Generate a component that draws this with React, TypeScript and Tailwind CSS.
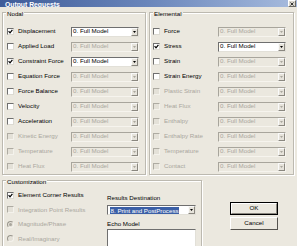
import React from "react";

type RowDef = { label: string; checked?: boolean; enabled: boolean; dd: boolean };

const nodal: RowDef[] = [
  { label: "Displacement", checked: true, enabled: true, dd: true },
  { label: "Applied Load", enabled: true, dd: false },
  { label: "Constraint Force", checked: true, enabled: true, dd: true },
  { label: "Equation Force", enabled: true, dd: false },
  { label: "Force Balance", enabled: true, dd: false },
  { label: "Velocity", enabled: true, dd: false },
  { label: "Acceleration", enabled: true, dd: false },
  { label: "Kinetic Energy", enabled: false, dd: false },
  { label: "Temperature", enabled: false, dd: false },
  { label: "Heat Flux", enabled: false, dd: false },
];

const elemental: RowDef[] = [
  { label: "Force", enabled: true, dd: false },
  { label: "Stress", checked: true, enabled: true, dd: true },
  { label: "Strain", enabled: true, dd: false },
  { label: "Strain Energy", enabled: true, dd: false },
  { label: "Plastic Strain", enabled: false, dd: false },
  { label: "Heat Flux", enabled: false, dd: false },
  { label: "Enthalpy", enabled: false, dd: false },
  { label: "Enthalpy Rate", enabled: false, dd: false },
  { label: "Temperature", enabled: false, dd: false },
  { label: "Contact", enabled: false, dd: false },
];

function Check({ checked, enabled }: { checked?: boolean; enabled: boolean }) {
  return (
    <div
      className={
        enabled
          ? "w-[7px] h-[7px] shrink-0 bg-white border border-t-[#6f6f6f] border-l-[#6f6f6f] border-b-[#dcdad2] border-r-[#dcdad2] flex items-center justify-center"
          : "w-[7px] h-[7px] shrink-0 bg-[#e4e1d8] border border-t-[#aeaba2] border-l-[#aeaba2] border-b-[#f4f2ec] border-r-[#f4f2ec]"
      }
    >
      {checked && (
        <svg width="5" height="5" viewBox="0 0 5 5">
          <path d="M0.6 2.2 L2 3.8 L4.4 0.8" stroke="#000" strokeWidth="1.2" fill="none" />
        </svg>
      )}
    </div>
  );
}

function Arrow({ enabled }: { enabled: boolean }) {
  return (
    <div className="w-[7px] h-full shrink-0 bg-[#e6e3db] border border-t-[#fafafa] border-l-[#fafafa] border-b-[#8a877f] border-r-[#8a877f] flex items-center justify-center">
      <svg width="3" height="2" viewBox="0 0 3 2">
        <polygon points="0,0 3,0 1.5,2" fill={enabled ? "#000" : "#a9a69d"} />
      </svg>
    </div>
  );
}

function Dropdown({ enabled }: { enabled: boolean }) {
  return (
    <div
      className={
        enabled
          ? "w-[68px] h-[10px] shrink-0 flex items-center bg-white border border-t-[#6f6f6f] border-l-[#6f6f6f] border-b-[#e2e0d8] border-r-[#e2e0d8]"
          : "w-[68px] h-[10px] shrink-0 flex items-center bg-[#ebe8df] border border-t-[#a8a59c] border-l-[#a8a59c] border-b-[#f6f4ee] border-r-[#f6f4ee]"
      }
    >
      <span className={enabled ? "flex-1 pl-[1px] text-black leading-none" : "flex-1 pl-[1px] text-[#aaa79e] leading-none"}>
        0. Full Model
      </span>
      <Arrow enabled={enabled} />
    </div>
  );
}

function Row({ r }: { r: RowDef }) {
  return (
    <div className="flex items-center h-[15px]">
      <Check checked={r.checked} enabled={r.enabled} />
      <span className={r.enabled ? "ml-[4px] flex-1 text-black leading-none" : "ml-[4px] flex-1 text-[#aaa79e] leading-none"}>
        {r.label}
      </span>
      <Dropdown enabled={r.dd} />
    </div>
  );
}

function Group({ title, rows, className }: { title: string; rows: RowDef[]; className: string }) {
  return (
    <div className={className}>
      <span className="absolute left-[3px] top-[-3px] px-[1px] bg-[#ebe8df] text-black leading-[7px]">{title}</span>
      {rows.map((r) => (
        <Row key={r.label} r={r} />
      ))}
    </div>
  );
}

export default function App() {
  return (
    <div className="w-[297px] h-[246px] overflow-hidden bg-[#ebe8df] font-['Liberation_Sans',Arial,sans-serif] text-[6.2px] flex flex-col">
      {/* title bar */}
      <div className="h-[7px] shrink-0 flex items-end justify-between bg-gradient-to-r from-[#3f5c99] via-[#6a86bb] to-[#a8bcde] overflow-hidden">
        <span className="ml-[5px] mb-[-1px] text-white font-bold text-[6.8px] leading-[7px]">Output Requests</span>
        <div className="w-[8px] h-[7px] mr-[1px] bg-[#d9d6ce] border border-t-white border-l-white border-b-[#6c6a64] border-r-[#6c6a64] flex items-center justify-center">
          <svg width="4" height="4" viewBox="0 0 4 4">
            <path d="M0.5 0.5 L3.5 3.5 M3.5 0.5 L0.5 3.5" stroke="#222" strokeWidth="0.9" />
          </svg>
        </div>
      </div>

      {/* groups */}
      <div className="flex gap-[3px] mt-[5px] ml-[2px]">
        <Group
          title="Nodal"
          rows={nodal}
          className="relative w-[144px] border border-[#bcb9b0] shadow-[inset_1px_1px_0_#fff,1px_1px_0_#fff] pt-[11px] pl-[4px] pr-[6px]"
        />
        <Group
          title="Elemental"
          rows={elemental}
          className="relative w-[145px] border border-[#bcb9b0] shadow-[inset_1px_1px_0_#fff,1px_1px_0_#fff] pt-[11px] pl-[3px] pr-[7px]"
        />
      </div>

      {/* bottom */}
      <div className="flex mt-[5px] ml-[2px]">
        <div className="relative w-[200px] h-[80px] shrink-0 flex border border-[#bcb9b0] shadow-[inset_1px_1px_0_#fff,1px_1px_0_#fff]">
          <span className="absolute left-[3px] top-[-3px] px-[1px] bg-[#ebe8df] text-black leading-[7px]">Customization</span>
          <div className="w-[104px] pl-[4px] pt-[7px] flex flex-col">
            <div className="flex items-center h-[14.5px]">
              <Check checked enabled />
              <span className="ml-[4px] text-black leading-none">Element Corner Results</span>
            </div>
            <div className="flex items-center h-[14.5px]">
              <Check enabled={false} />
              <span className="ml-[4px] text-[#aaa79e] leading-none">Integration Point Results</span>
            </div>
            <div className="flex items-center h-[14.5px]">
              <div className="w-[7px] h-[7px] rounded-full bg-[#e4e1d8] border border-t-[#9a978e] border-l-[#9a978e] border-b-[#f4f2ec] border-r-[#f4f2ec] flex items-center justify-center">
                <div className="w-[3px] h-[3px] rounded-full bg-[#a9a69d]" />
              </div>
              <span className="ml-[4px] text-[#aaa79e] leading-none">Magnitude/Phase</span>
            </div>
            <div className="flex items-center h-[14.5px]">
              <div className="w-[7px] h-[7px] rounded-full bg-[#e4e1d8] border border-t-[#9a978e] border-l-[#9a978e] border-b-[#f4f2ec] border-r-[#f4f2ec]" />
              <span className="ml-[4px] text-[#aaa79e] leading-none">Real/Imaginary</span>
            </div>
          </div>
          <div className="w-[89px] pt-[12.5px] flex flex-col">
            <span className="h-[7px] leading-[7px] text-black">Results Destination</span>
            <div className="mt-[4.5px] w-[89px] h-[10px] flex items-center bg-white border border-t-[#6f6f6f] border-l-[#6f6f6f] border-b-[#e2e0d8] border-r-[#e2e0d8]">
              <div className="flex-1 pl-[2px] pr-[5px] h-full flex items-center">
                <span className="bg-[#3b5fa6] text-white leading-[7px] px-[0.5px]">8. Print and PostProcess</span>
              </div>
              <Arrow enabled />
            </div>
            <span className="mt-[4.5px] h-[7px] leading-[7px] text-black">Echo Model</span>
            <div className="mt-[2.5px] w-[89px] h-[18px] bg-white border border-t-[#6f6f6f] border-l-[#6f6f6f] border-b-[#e2e0d8] border-r-[#e2e0d8]" />
          </div>
        </div>

        <div className="ml-[28px] mt-[22px] flex flex-col gap-[2px]">
          <div className="w-[48px] h-[13px] border border-black">
            <div className="w-full h-full bg-[#ebe8df] border border-t-white border-l-white border-b-[#8a877f] border-r-[#8a877f] flex items-center justify-center text-black leading-none">
              OK
            </div>
          </div>
          <div className="w-[48px] h-[13px] bg-[#ebe8df] border border-t-white border-l-white border-b-[#55534e] border-r-[#55534e] flex items-center justify-center text-black leading-none">
            Cancel
          </div>
        </div>
      </div>
    </div>
  );
}
